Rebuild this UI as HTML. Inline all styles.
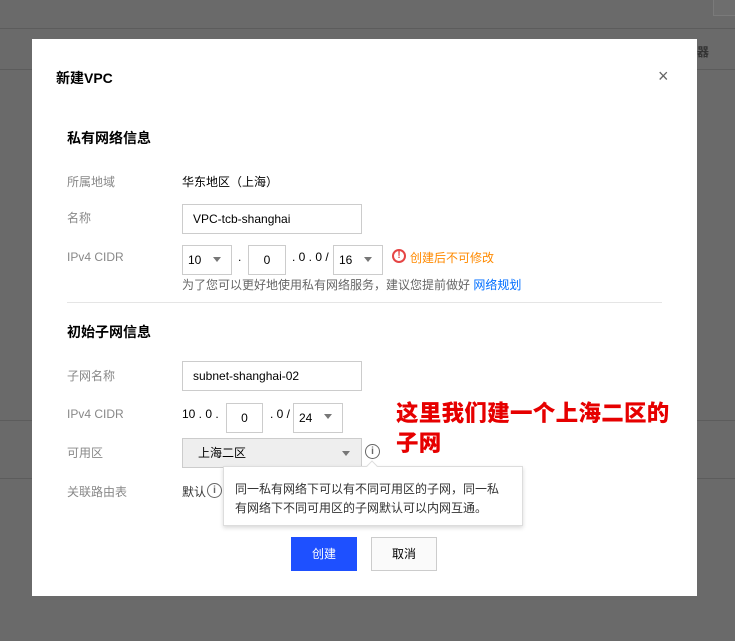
<!DOCTYPE html>
<html><head><meta charset="utf-8"><style>
*{margin:0;padding:0;box-sizing:border-box}
body{width:735px;height:641px;background:#6a6a6a;position:relative;overflow:hidden;font-family:"Liberation Sans","Noto Sans CJK SC",sans-serif;font-size:12px;color:#000}
.a{position:absolute;white-space:nowrap}
.hl{position:absolute;left:0;width:735px;height:1px;background:#5c5c5c}
.m{position:absolute;left:32px;top:39px;width:665px;height:557px;background:#fff}
.lb{color:#888;font-size:12px}
.in{position:absolute;border:1px solid #ccc;background:#fff;height:30px;line-height:28px;font-size:12px;color:#000}
.tri{position:absolute;width:0;height:0;border-left:4px solid transparent;border-right:4px solid transparent;border-top:5px solid #777}
.red{color:#e60000;font-weight:900;font-size:22.5px;letter-spacing:0.3px;text-shadow:0 0 2px #fff,0 0 2px #fff,1px 1px 3px #fff}
</style></head><body>
<div class="hl" style="top:28px"></div>
<div class="hl" style="top:69px"></div>
<div class="hl" style="top:420px"></div>
<div class="hl" style="top:478px"></div>
<div class="a" style="left:713px;top:-2px;width:30px;height:18px;border:1px solid #7a7a7a;background:#6e6e6e"></div>
<div class="a" style="left:697px;top:43px;color:#333;font-size:12px;font-weight:bold">器</div>
<div class="m"></div>
<div class="a" style="left:56px;top:68px;font-size:14px;font-weight:bold">新建VPC</div>
<div class="a" style="left:658px;top:66px;font-size:18px;color:#666">×</div>
<div class="a" style="left:67px;top:128px;font-size:14px;font-weight:bold">私有网络信息</div>
<div class="a lb" style="left:67px;top:173px">所属地域</div>
<div class="a" style="left:182px;top:173px">华东地区（上海）</div>
<div class="a lb" style="left:67px;top:209px">名称</div>
<div class="in" style="left:182px;top:204px;width:180px;padding-left:10px">VPC-tcb-shanghai</div>
<div class="a lb" style="left:67px;top:250px">IPv4 CIDR</div>
<div class="in" style="left:182px;top:245px;width:50px;padding-left:5px">10</div><div class="tri" style="left:213px;top:257px"></div>
<div class="a" style="left:238px;top:250px">.</div>
<div class="in" style="left:248px;top:245px;width:38px;text-align:center">0</div>
<div class="a" style="left:292px;top:250px">. 0 . 0 /</div>
<div class="in" style="left:333px;top:245px;width:50px;padding-left:5px">16</div><div class="tri" style="left:364px;top:257px"></div>
<div class="a" style="left:392px;top:249px;width:14px;height:14px;border-radius:50%;border:2px solid #e54545;color:#e54545;font-size:10px;font-weight:bold;line-height:10px;text-align:center">!</div>
<div class="a" style="left:410px;top:249px;color:#ff8a00">创建后不可修改</div>
<div class="a" style="left:182px;top:276px;color:#666">为了您可以更好地使用私有网络服务，建议您提前做好 <span style="color:#006eff">网络规划</span></div>
<div class="a" style="left:67px;top:302px;width:595px;height:1px;background:#e5e5e5"></div>
<div class="a" style="left:67px;top:322px;font-size:14px;font-weight:bold">初始子网信息</div>
<div class="a lb" style="left:67px;top:367px">子网名称</div>
<div class="in" style="left:182px;top:361px;width:180px;padding-left:10px">subnet-shanghai-02</div>
<div class="a lb" style="left:67px;top:407px">IPv4 CIDR</div>
<div class="a" style="left:182px;top:407px">10 . 0 .</div>
<div class="in" style="left:226px;top:403px;width:37px;text-align:center">0</div>
<div class="a" style="left:270px;top:407px">. 0 /</div>
<div class="in" style="left:293px;top:403px;width:50px;padding-left:5px">24</div><div class="tri" style="left:324px;top:414px"></div>
<div class="a lb" style="left:67px;top:444px">可用区</div>
<div class="in" style="left:182px;top:438px;width:180px;padding-left:15px;background:#eee;height:30px">上海二区</div><div class="tri" style="left:342px;top:451px"></div>
<div class="a" style="left:365px;top:444px;width:15px;height:15px;border-radius:50%;border:1px solid #666;color:#666;font-size:10px;line-height:13px;text-align:center;font-weight:bold">i</div>
<div class="a lb" style="left:67px;top:483px">关联路由表</div>
<div class="a" style="left:182px;top:483px;color:#333">默认</div>
<div class="a" style="left:207px;top:483px;width:15px;height:15px;border-radius:50%;border:1px solid #666;color:#666;font-size:10px;line-height:13px;text-align:center;font-weight:bold">i</div>
<div class="a" style="left:223px;top:466px;width:300px;height:60px;background:#fff;border:1px solid #ddd;box-shadow:0 2px 4px rgba(0,0,0,.15)"></div>
<div class="a" style="left:368px;top:462px;width:8px;height:8px;background:#fff;border-left:1px solid #ddd;border-top:1px solid #ddd;transform:rotate(45deg)"></div>
<div class="a" style="left:235px;top:480px;color:#333;line-height:19px">同一私有网络下可以有不同可用区的子网，同一私<br>有网络下不同可用区的子网默认可以内网互通。</div>
<div class="a" style="left:291px;top:537px;width:66px;height:34px;background:#1e50ff;color:#fff;text-align:center;line-height:34px">创建</div>
<div class="a" style="left:371px;top:537px;width:66px;height:34px;border:1px solid #ccc;background:#fafafa;text-align:center;line-height:32px">取消</div>
<div class="a red" style="left:396px;top:396px">这里我们建一个上海二区的</div>
<div class="a red" style="left:396px;top:426px">子网</div>
</body></html>
